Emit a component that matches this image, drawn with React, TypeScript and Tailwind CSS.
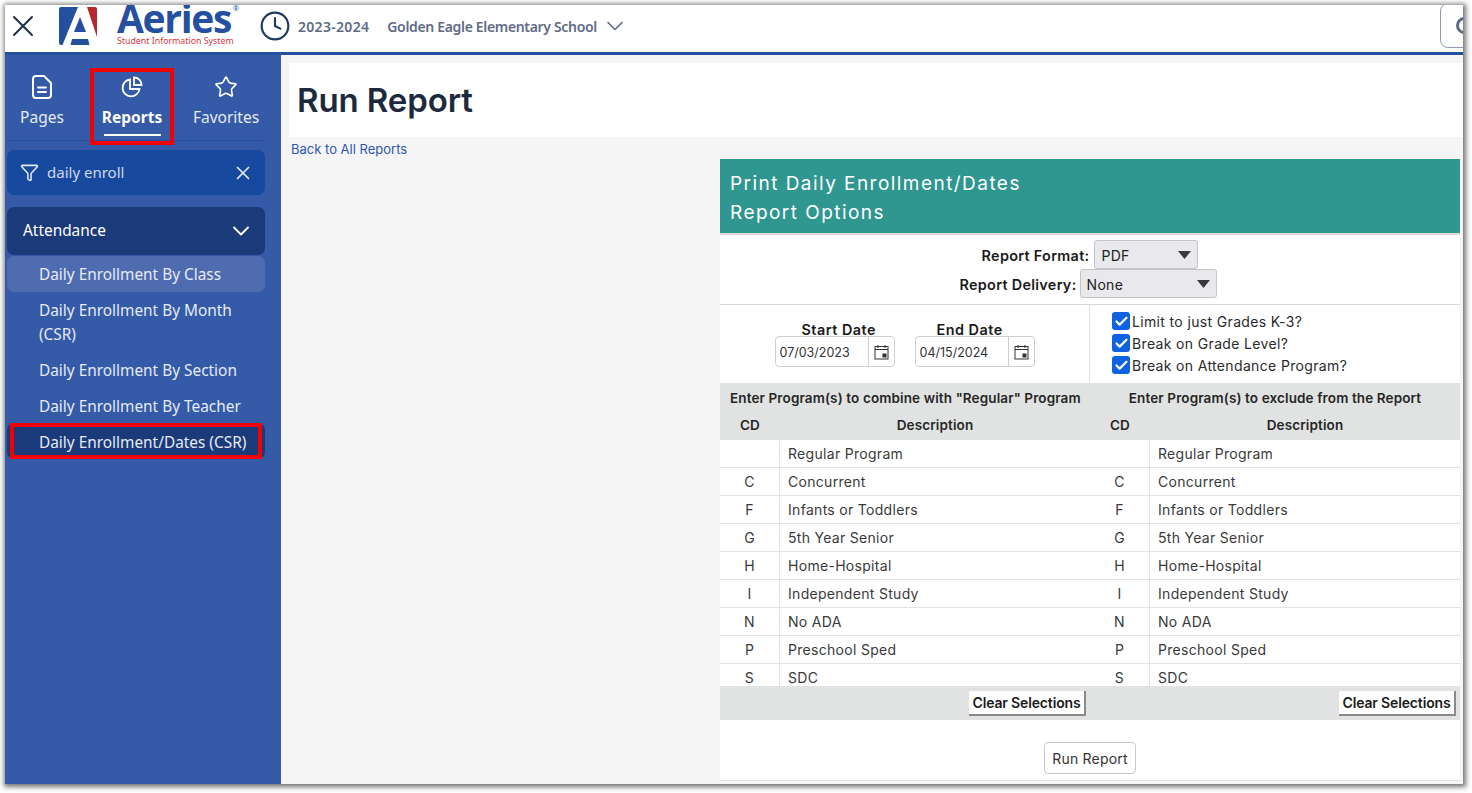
import React from "react";
import { X, Clock, ChevronDown, Funnel, Star, Check } from "lucide-react";

const rows: [string, string][] = [
  ["", "Regular Program"],
  ["C", "Concurrent"],
  ["F", "Infants or Toddlers"],
  ["G", "5th Year Senior"],
  ["H", "Home-Hospital"],
  ["I", "Independent Study"],
  ["N", "No ADA"],
  ["P", "Preschool Sped"],
  ["S", "SDC"],
];

const main = "font-['Inter','Noto_Sans',sans-serif]";

function Logo() {
  return (
    <div className="flex items-start ml-[18px] w-[200px] h-[47px] shrink-0">
      <svg width="40" height="38" viewBox="0 0 40 38" className="mt-[2px] shrink-0">
        <path d="M2 0h17L3.500 38H2Q0 38 0 36V2Q0 0 2 0z" fill="#24509f" />
        <path d="M28 0h8q2 0 2 2v28z" fill="#b6272d" />
        <path d="M21 10l6 15H15z" fill="#24509f" />
        <path d="M13 32h16l1.500 6H11.500z" fill="#24509f" />
      </svg>
      <div className="ml-[18px] flex flex-col items-start relative w-[120px]">
        <span className="font-['Open_Sans',sans-serif] font-bold text-[39px] leading-[26px] text-[#24509f] tracking-[-1.3px]">Aeries</span>
        <span className="font-['Noto_Sans',sans-serif] text-[8.800px] leading-[10px] text-[#d6383f] mt-[5px] whitespace-nowrap">Student Information System</span>
        <span className="absolute left-[116px] top-0 text-[7px] leading-[8px] text-[#24509f]">®</span>
      </div>
    </div>
  );
}

function Tab({ icon, label, active, width }: { icon: React.ReactNode; label: string; active?: boolean; width: string }) {
  return (
    <div className={`${width} flex flex-col items-center relative pt-[19px]`}>
      <div className="h-[26px] flex items-center justify-center text-white">{icon}</div>
      <span className={`text-[15.500px] leading-[24px] mt-[5px] text-[#e6ebf5] ${active ? "font-bold text-white" : ""}`}>{label}</span>
      {active && <span className="w-[57px] h-[2px] bg-white mt-[5px]" />}
      {active && <span className="absolute left-[13px] w-[84px] top-[13px] h-[77px] border-[4px] border-[#f00000]" />}
    </div>
  );
}

function SelectBox({ label, value, width, rowClass, gap }: { label: string; value: string; width: string; rowClass: string; gap: string }) {
  return (
    <div className={`flex items-center justify-center h-[29px] ${rowClass}`}>
      <span className={`text-[14.400px] tracking-[0.3px] font-semibold text-[#1a1a1a] pt-[2px] ${gap}`}>{label}:</span>
      <div className={`${width} h-[29px] bg-[#e9e9ed] border border-[#c4c4c4] rounded-[3px] flex items-center justify-between pl-[6px] pr-[6px]`}>
        <span className="text-[14px] tracking-[0.3px] text-[#222] pt-[2px]">{value}</span>
        <svg width="13" height="8" viewBox="0 0 13 8"><path d="M0 0h13L6.500 8z" fill="#3a3a3a" /></svg>
      </div>
    </div>
  );
}

function DateBox({ label, value, labelPad }: { label: string; value: string; labelPad: string }) {
  return (
    <div className="flex flex-col items-start">
      <span className={`text-[14.400px] tracking-[0.5px] leading-[16px] font-semibold text-[#1a1a1a] mt-[17px] ${labelPad}`}>{label}</span>
      <div className="w-[120px] h-[31px] flex border border-[#cfcfcf] rounded-[4px] -mt-[2px]">
        <span className="flex-1 text-[12.500px] leading-[31px] pl-[4px] text-[#333]">{value}</span>
        <span className="w-[26px] border-l border-[#cfcfcf] flex items-center justify-center">
          <svg width="15" height="16" viewBox="0 0 15 16" fill="none" stroke="#333" strokeWidth="1">
            <rect x="1" y="2.500" width="13" height="12.500" />
            <path d="M1 5.500h13M4 1v3M11 1v3" />
            <rect x="9" y="10" width="3" height="3" fill="#333" />
          </svg>
        </span>
      </div>
    </div>
  );
}

function Check2({ label }: { label: string }) {
  return (
    <div className="flex items-center h-[22px]">
      <span className="w-[18px] h-[18px] rounded-[3px] bg-[#0f62e0] flex items-center justify-center mr-[2px]">
        <Check size={15} strokeWidth={3.500} color="white" />
      </span>
      <span className="text-[14px] tracking-[0.35px] text-[#2a2a2a]">{label}</span>
    </div>
  );
}

function ClearBtn() {
  return (
    <button className="w-[117px] h-[25px] bg-white text-[14px] font-semibold text-[#1a1a1a] tracking-[-0.15px] border-r-2 border-b-2 border-[#8a8a8a] whitespace-nowrap">Clear Selections</button>
  );
}

export default function App() {
  return (
    <div className="w-[1472px] h-[793px] bg-white pl-[5px] pr-[9px] pt-[5px] pb-[9px] overflow-hidden">
      <div className="w-full h-full flex flex-col bg-white shadow-[1px_1px_5px_2px_rgba(0,0,0,0.55)] overflow-hidden font-['Noto_Sans',sans-serif]">
        <header className="h-[50px] shrink-0 flex items-start bg-white border-b-[3px] border-[#24509f]">
          <X size={36} strokeWidth={1.300} color="#1f2f46" className="mt-[3px] shrink-0" />
          <Logo />
          <Clock size={32} strokeWidth={1.600} color="#1f3a5c" className="mt-[5px] shrink-0" />
          <span className="ml-[7px] mt-[11px] text-[14px] font-semibold text-[#5f6b85] tracking-[0.3px]">2023-2024</span>
          <span className="ml-[18px] mt-[11px] text-[14px] font-semibold text-[#5f6b85] tracking-[-0.33px]">Golden Eagle Elementary School</span>
          <ChevronDown size={28} strokeWidth={1.400} color="#5f6b85" className="ml-[4px] mt-[7px] shrink-0" />
          <div className="ml-auto mt-[-2px] w-[40px] h-[45px] border border-[#8f9ab2] rounded-[8px] -mr-[17px] flex items-center pl-[15px]">
            <span className="w-[17px] h-[17px] shrink-0 border-[3px] border-[#5f6b85] rounded-full" />
          </div>
        </header>
        <div className="flex-1 flex min-h-0">
          <aside className="w-[276px] shrink-0 bg-[#345aa8] flex flex-col text-[#e6ebf5] text-[15.400px]">
            <div className="mx-[2px] w-[258px] h-[86px] flex border-b border-[#24509f]">
              <Tab width="w-[70px]" label="Pages" icon={<svg width="20" height="24" viewBox="0 0 20 24" fill="none" stroke="white" strokeWidth="2" strokeLinejoin="round" strokeLinecap="round"><path d="M4 1h8l7 7v12a3 3 0 0 1-3 3H4a3 3 0 0 1-3-3V4a3 3 0 0 1 3-3z" /><path d="M6 12.500h8M6 17h8" /></svg>} />
              <Tab width="w-[110px]" label="Reports" active icon={<svg width="22" height="22" viewBox="0 0 22 22" fill="none" stroke="white" strokeWidth="1.800"><path d="M9 3.500a8.500 8.500 0 1 0 9.500 9.500H9z" /><path d="M13 1.500a7.500 7.500 0 0 1 7.500 7.500H13z" /></svg>} />
              <Tab width="w-[78px]" label="Favorites" icon={<Star size={24} strokeWidth={1.600} />} />
            </div>
            <div className="mx-[2px] mt-[9px] w-[258px] h-[45px] rounded-[7px] bg-[#174a9f] flex items-center pl-[13px] pr-[11px] text-[15px]">
              <Funnel size={19} strokeWidth={2} color="#dfe5f2" />
              <span className="ml-[8px] text-[#cfd8ea]">daily enroll</span>
              <X size={22} strokeWidth={1.800} color="#e6ebf5" className="ml-auto" />
            </div>
            <div className="mx-[2px] mt-[12px] w-[258px] h-[48px] rounded-[7px] bg-[#1b3a7a] flex items-center pl-[16px] pr-[10px] text-white">
              Attendance
              <ChevronDown size={28} strokeWidth={1.600} className="ml-auto" />
            </div>
            <nav className="mx-[2px] w-[258px] mt-[1px] flex flex-col">
              <div className="h-[36px] rounded-[7px] bg-[#4f6cb0] pl-[32px] leading-[37px]">Daily Enrollment By Class</div>
              <div className="pl-[32px] pr-[8px] pt-[7px] pb-[4px] leading-[24px]">Daily Enrollment By Month (CSR)</div>
              <div className="h-[36px] pl-[32px] leading-[40px]">Daily Enrollment By Section</div>
              <div className="h-[36px] pl-[32px] leading-[40px]">Daily Enrollment By Teacher</div>
              <div className="relative h-[36px] rounded-[7px] bg-[#1b3a7a] pl-[32px] leading-[40px] whitespace-nowrap">
                Daily Enrollment/Dates (CSR)
                <span className="absolute left-[3px] right-[3px] top-0 bottom-0 border-[4px] border-[#f00000]" />
              </div>
            </nav>
          </aside>
          <main className={`flex-1 min-w-0 bg-[#f5f5f5] flex flex-col ${main}`}>
            <div className="ml-[8px] mt-[8px] h-[74px] bg-white flex items-center pl-[8px] pt-[2px] shrink-0">
              <h1 className="text-[33px] font-semibold text-[#1d2a3e] tracking-[-0.1px]">Run Report</h1>
            </div>
            <a className="ml-[10px] mt-[3px] text-[13px] leading-[18px] text-[#2f58ae] shrink-0">Back to All Reports</a>
            <section className="ml-[439px] mt-[1px] w-[740px] flex-1 min-h-0 bg-white flex flex-col overflow-hidden">
              <div className="h-[74px] shrink-0 bg-[#2f9690] text-white text-[19px] tracking-[1.450px] leading-[29px] px-[10px] pt-[10px]">
                <div>Print Daily Enrollment/Dates</div>
                <div>Report Options</div>
              </div>
              <div className="h-[72px] shrink-0 border-t-2 border-[#d9d9d9] border-b pt-[5px] flex flex-col">
                <SelectBox label="Report Format" value="PDF" width="w-[104px]" rowClass="" gap="mr-[5px]" />
                <SelectBox label="Report Delivery" value="None" width="w-[137px]" rowClass="pr-[4px]" gap="mr-[3px]" />
              </div>
              <div className="h-[78px] shrink-0 flex">
                <div className="w-[370px] border-r border-[#e0e0e0] flex justify-center gap-[20px]">
                  <DateBox label="Start Date" value="07/03/2023" labelPad="ml-[27px]" />
                  <DateBox label="End Date" value="04/15/2024" labelPad="ml-[22px]" />
                </div>
                <div className="pl-[22px] pt-[5px]">
                  <Check2 label="Limit to just Grades K-3?" />
                  <Check2 label="Break on Grade Level?" />
                  <Check2 label="Break on Attendance Program?" />
                </div>
              </div>
              <div className="shrink-0 h-[57px] bg-[#e1e3e2] text-[13.500px] font-semibold text-[#262626] tracking-[0.12px] grid grid-cols-[60px_310px_60px_310px] grid-rows-[29px_28px]">
                <div className="col-span-2 pl-[10px] leading-[30px] whitespace-nowrap">Enter Program(s) to combine with "Regular" Program</div>
                <div className="col-span-2 text-center leading-[30px] whitespace-nowrap">Enter Program(s) to exclude from the Report</div>
                <div className="text-center leading-[26px]">CD</div>
                <div className="text-center leading-[26px]">Description</div>
                <div className="text-center leading-[26px]">CD</div>
                <div className="text-center leading-[26px]">Description</div>
              </div>
              <div className="h-[246px] shrink-0 overflow-hidden">
                {rows.map(([cd, desc]) => (
                  <div key={desc} className="grid grid-cols-[60px_310px_60px_310px] h-[28px] border-b border-[#e3e3e3] text-[14px] tracking-[0.3px] leading-[28px] text-[#3a3a3a]">
                    <div className="text-center border-r border-[#e3e3e3]">{cd}</div>
                    <div className="pl-[8px]">{desc}</div>
                    <div className="text-center border-r border-[#e3e3e3]">{cd}</div>
                    <div className="pl-[8px]">{desc}</div>
                  </div>
                ))}
              </div>
              <div className="h-[34px] shrink-0 bg-[#e1e3e2] flex items-center pr-[4px]">
                <div className="ml-[249px]"><ClearBtn /></div>
                <div className="ml-auto"><ClearBtn /></div>
              </div>
              <div className="flex-1 min-h-0 flex justify-center pt-[22px] pb-[6px] border-b border-[#e3e3e3]">
                <button className="w-[92px] h-[32px] border border-[#c9c9c9] rounded-[4px] text-[14px] tracking-[0.2px] text-[#333] bg-white pt-[1px]">Run Report</button>
              </div>
            </section>
            <div className="h-[3px] shrink-0" />
          </main>
        </div>
      </div>
    </div>
  );
}
